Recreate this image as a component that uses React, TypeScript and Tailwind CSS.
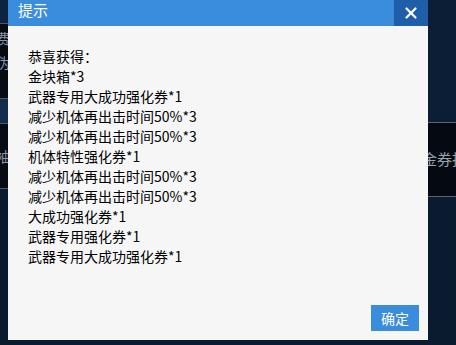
import { X } from "lucide-react"

const items = [
    "恭喜获得：",
    "金块箱*3",
    "武器专用大成功强化券*1",
    "减少机体再出击时间50%*3",
    "减少机体再出击时间50%*3",
    "机体特性强化券*1",
    "减少机体再出击时间50%*3",
    "减少机体再出击时间50%*3",
    "大成功强化券*1",
    "武器专用强化券*1",
    "武器专用大成功强化券*1",
]

const font = { fontFamily: '"Microsoft YaHei", "Noto Sans CJK SC", sans-serif' }

const App = () => {
    return (
        <div
            className="relative w-[456px] h-[345px] overflow-hidden bg-[#0a1b30] flex justify-between"
            style={font}
        >
            {/* left strip of the page behind */}
            <div className="w-[8px] flex flex-col overflow-hidden">
                <div className="h-[23px] bg-[#0d2440]" />
                <div className="h-px bg-[#4a5868]" />
                <div className="h-[74px] bg-[#060b14] flex flex-col text-[14px] text-[#8a96a4] leading-[24px] pt-[2px] -ml-[4px]">
                    <span>费</span>
                    <span>伪</span>
                </div>
                <div className="h-px bg-[#4a5868]" />
                <div className="h-[24px] bg-[#112d4d]" />
                <div className="h-px bg-[#4a5868]" />
                <div className="h-[64px] bg-[#060b14] flex items-center text-[14px] text-[#8a96a4] -ml-[4px]">
                    <span>袖</span>
                </div>
                <div className="h-px bg-[#4a5868]" />
                <div className="flex-1 bg-[#0a1b30]" />
            </div>

            {/* right strip of the page behind */}
            <div className="w-[28px] flex flex-col overflow-hidden">
                <div className="h-[122px] bg-[#0b1e36]" />
                <div className="h-px bg-[#5a6572]" />
                <div className="h-[73px] bg-[#050a12] flex items-center text-[15px] text-[#9aa3ad] whitespace-nowrap -ml-[6px]">
                    <span>金券抽</span>
                </div>
                <div className="h-px bg-[#5a6572]" />
                <div className="flex-1 bg-[#0a1b30]" />
            </div>

            {/* dialog */}
            <div className="absolute left-[8px] top-0 w-[420px] h-[340px] flex flex-col bg-[#f6f6f7]">
                <div className="h-[26px] flex bg-[#3a8cdc]">
                    <div className="flex-1 pl-[10px] text-white text-[15px] leading-[20px]">
                        提示
                    </div>
                    <div className="w-[34px] flex items-center justify-center bg-[#1f5ea9]">
                        <X className="w-[18px] h-[18px] text-white" strokeWidth={3} />
                    </div>
                </div>
                <div className="flex-1 flex flex-col pl-[20px] pt-[20px] text-[14px] leading-[20px] text-black">
                    {items.map((t, i) => (
                        <p key={i}>{t}</p>
                    ))}
                </div>
                <div className="flex justify-end pr-[9px] pb-[9px]">
                    <button className="w-[48px] h-[26px] bg-[#3a8cdc] text-white text-[14px] leading-[26px]">
                        确定
                    </button>
                </div>
            </div>
        </div>
    )
}

export default App
